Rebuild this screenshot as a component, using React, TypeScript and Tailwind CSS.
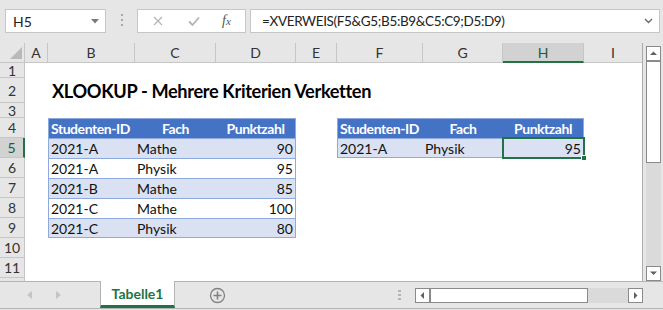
import { ReactElement } from 'react'

type Col = { key: string; w: string }

const COLS: Col[] = [
  { key: 'A', w: 'w-[23px]' },
  { key: 'B', w: 'w-[87px]' },
  { key: 'C', w: 'w-[81px]' },
  { key: 'D', w: 'w-[80px]' },
  { key: 'E', w: 'w-[41px]' },
  { key: 'F', w: 'w-[86px]' },
  { key: 'G', w: 'w-[80px]' },
  { key: 'H', w: 'w-[81px]' },
  { key: 'I', w: 'w-[58px]' },
]

const ROWS: { n: number; h: string }[] = [
  { n: 1, h: 'h-[15px]' },
  { n: 2, h: 'h-[25px]' },
  { n: 3, h: 'h-[15px]' },
  { n: 4, h: 'h-[20px]' },
  { n: 5, h: 'h-[20px]' },
  { n: 6, h: 'h-[20px]' },
  { n: 7, h: 'h-[20px]' },
  { n: 8, h: 'h-[20px]' },
  { n: 9, h: 'h-[20px]' },
  { n: 10, h: 'h-[20px]' },
  { n: 11, h: 'h-[20px]' },
]

type Table = { cols: string[]; startRow: number; header: string[]; rows: string[][] }

const TABLES: Table[] = [
  {
    cols: ['B', 'C', 'D'],
    startRow: 4,
    header: ['Studenten-ID', 'Fach', 'Punktzahl'],
    rows: [
      ['2021-A', 'Mathe', '90'],
      ['2021-A', 'Physik', '95'],
      ['2021-B', 'Mathe', '85'],
      ['2021-C', 'Mathe', '100'],
      ['2021-C', 'Physik', '80'],
    ],
  },
  {
    cols: ['F', 'G', 'H'],
    startRow: 4,
    header: ['Studenten-ID', 'Fach', 'Punktzahl'],
    rows: [['2021-A', 'Physik', '95']],
  },
]

const ACTIVE_COL = 'H'
const ACTIVE_ROW = 5

const renderTableCell = (col: string, row: number): ReactElement | null => {
  for (const t of TABLES) {
    const ci = t.cols.indexOf(col)
    const ri = row - t.startRow
    if (ci < 0 || ri < 0 || ri > t.rows.length) continue
    const isHeader = ri === 0
    const isLast = ri === t.rows.length
    const text = isHeader ? t.header[ci] : t.rows[ri - 1][ci]
    const align = isHeader
      ? ci === 0
        ? 'justify-start'
        : 'justify-center'
      : ci === 2
        ? 'justify-end'
        : 'justify-start'
    return (
      <div
        className={[
          'flex h-full w-full items-center whitespace-nowrap border-t border-[#8ea9db] px-[2px]',
          align,
          isHeader
            ? 'bg-[#4472c4] font-bold tracking-[-0.45px] text-white'
            : ri % 2 === 1
              ? 'bg-[#d9e1f2]'
              : 'bg-white',
          isLast ? 'border-b' : '',
          ci === 0 ? 'border-l' : '',
          ci === 2 ? 'border-r' : '',
        ].join(' ')}
      >
        {text}
      </div>
    )
  }
  return null
}

const FormulaBar = (): ReactElement => (
  <div className="flex h-[43px] shrink-0 items-start pl-[5px] pt-[9px]">
    <div className="flex h-[24px] w-[101px] items-center justify-between border border-[#c6c6c6] bg-white pl-[7px] pr-[6px] text-[14px] text-[#222]">
      <span>H5</span>
      <svg width="8" height="5" viewBox="0 0 8 5">
        <path d="M0 0 H8 L4 4.5 Z" fill="#7a7a7a" />
      </svg>
    </div>
    <div className="ml-[15px] mt-[5px] flex flex-col gap-[3px]">
      <span className="h-[2px] w-[2px] bg-[#a6a6a6]" />
      <span className="h-[2px] w-[2px] bg-[#a6a6a6]" />
      <span className="h-[2px] w-[2px] bg-[#a6a6a6]" />
    </div>
    <div className="ml-[14px] flex h-[24px] w-[109px] items-center border border-[#c6c6c6] bg-white pl-[15px]">
      <svg width="10" height="10" viewBox="0 0 10 10">
        <path d="M1 1 L9 9 M9 1 L1 9" stroke="#b4b4b4" strokeWidth="1.2" />
      </svg>
      <svg className="ml-[25px]" width="12" height="10" viewBox="0 0 12 10">
        <path d="M1 5.5 L4.5 9 L11 1.5" stroke="#b4b4b4" strokeWidth="1.8" fill="none" />
      </svg>
      <span className="ml-[22px] font-['Liberation_Serif',serif] text-[14px] italic leading-none text-[#555]">
        f<span className="text-[11px]">x</span>
      </span>
    </div>
    <div className="ml-[4px] flex h-[24px] w-[410px] items-center justify-between border border-[#c6c6c6] bg-white pl-[11px] pr-[6px] text-[13.5px] tracking-[-0.35px] text-[#222]">
      <span>=XVERWEIS(F5&amp;G5;B5:B9&amp;C5:C9;D5:D9)</span>
      <svg width="9" height="6" viewBox="0 0 9 6">
        <path d="M1 1 L4.5 4.5 L8 1" stroke="#6a6a6a" strokeWidth="1.4" fill="none" />
      </svg>
    </div>
  </div>
)

const Sheet = (): ReactElement => (
  <div className="flex w-[643px] flex-col border-r border-[#ababab] bg-white text-[14px] text-[#111]">
    <div className="flex h-[20px] shrink-0">
      <div className="flex w-[25px] items-end justify-end border-b border-r border-[#c6c6c6] bg-[#e6e6e6] pb-[3px] pr-[2px]">
        <svg width="12" height="12" viewBox="0 0 12 12">
          <path d="M12 0 V12 H0 Z" fill="#b9b9b9" />
        </svg>
      </div>
      {COLS.map((c) => (
        <div
          key={c.key}
          className={[
            'flex items-center justify-center border-r text-[14px]',
            c.w,
            c.key === ACTIVE_COL
              ? 'border-b-2 border-b-[#217346] border-r-[#c6c6c6] bg-[#d2d2d2] text-[#1e5c3a]'
              : 'border-b border-[#c6c6c6] bg-[#e6e6e6] text-[#333]',
            c.key === 'I' ? 'border-r-0' : '',
          ].join(' ')}
        >
          {c.key}
        </div>
      ))}
    </div>
    {ROWS.map((r) => (
      <div key={r.n} className={['flex shrink-0', r.h].join(' ')}>
        <div
          className={[
            'flex w-[25px] items-center justify-center border-b border-[#c6c6c6] text-[14px]',
            r.n === ACTIVE_ROW
              ? 'border-r-2 border-r-[#217346] bg-[#d2d2d2] text-[#1e5c3a]'
              : 'border-r bg-[#e6e6e6] text-[#333]',
          ].join(' ')}
        >
          {r.n}
        </div>
        {COLS.map((c) => (
          <div key={c.key} className={['relative', c.w].join(' ')}>
            {r.n === 2 && c.key === 'B' ? (
              <div className="flex h-full items-center whitespace-nowrap pl-[4px] pt-[2px] text-[18.2px] font-bold tracking-[-0.35px] text-black">
                XLOOKUP - Mehrere Kriterien Verketten
              </div>
            ) : (
              renderTableCell(c.key, r.n)
            )}
            {r.n === ACTIVE_ROW && c.key === ACTIVE_COL && (
              <>
                <div className="absolute inset-[-1px] border-2 border-[#217346]" />
                <div className="absolute bottom-[-3px] right-[-3px] h-[6px] w-[6px] border border-white bg-[#217346]" />
              </>
            )}
          </div>
        ))}
      </div>
    ))}
    <div className="flex h-[3px] shrink-0">
      <div className="w-[25px] border-r border-[#c6c6c6] bg-[#e6e6e6]" />
    </div>
  </div>
)

const ScrollButton = ({ dir }: { dir: 'up' | 'down' | 'left' | 'right' }): ReactElement => {
  const d = {
    up: 'M1 5 L4.5 1.5 L8 5 Z',
    down: 'M1 1.5 L4.5 5 L8 1.5 Z',
    left: 'M5 1 L1.5 4.5 L5 8 Z',
    right: 'M2 1 L5.5 4.5 L2 8 Z',
  }[dir]
  const vertical = dir === 'up' || dir === 'down'
  return (
    <div className="flex h-[15px] w-[15px] shrink-0 items-center justify-center border border-[#8a8a8a] bg-white">
      <svg width={vertical ? 9 : 7} height={vertical ? 7 : 9} viewBox={vertical ? '0 0 9 7' : '0 0 7 9'}>
        <path d={d} fill="#606060" />
      </svg>
    </div>
  )
}

const VScroll = (): ReactElement => (
  <div className="flex w-[20px] flex-col pl-[3px] pt-[3px]">
    <ScrollButton dir="up" />
    <div className="h-[102px] w-[15px] border border-[#8a8a8a] bg-white" />
    <div className="w-[15px] flex-1 bg-[#dadada]" />
    <ScrollButton dir="down" />
  </div>
)

const TabBar = (): ReactElement => (
  <div className="flex h-[29px] shrink-0 flex-col">
    <div className="flex h-[28px] items-center border-b border-t border-[#b4b4b4]">
      <div className="flex w-[100px] items-center pl-[27px]">
        <svg width="5" height="8" viewBox="0 0 5 8">
          <path d="M5 0 V8 L0 4 Z" fill="#c4c4c4" />
        </svg>
        <svg className="ml-[24px]" width="5" height="8" viewBox="0 0 5 8">
          <path d="M0 0 V8 L5 4 Z" fill="#c4c4c4" />
        </svg>
      </div>
      <div className="-mt-[1px] flex h-[27px] w-[75px] items-center justify-center self-start border-x border-b-[3px] border-x-[#b4b4b4] border-b-[#217346] bg-white pt-[1px] text-[14px] font-bold text-[#217346]">
        Tabelle1
      </div>
      <svg className="ml-[34px]" width="17" height="17" viewBox="0 0 17 17">
        <circle cx="8.5" cy="8.5" r="7" stroke="#808080" strokeWidth="1.3" fill="none" />
        <path d="M8.5 4.5 V12.5 M4.5 8.5 H12.5" stroke="#808080" strokeWidth="1.6" />
      </svg>
      <div className="ml-[172px] flex flex-col gap-[2px]">
        <span className="h-[2px] w-[3px] bg-[#b4b4b4]" />
        <span className="h-[2px] w-[3px] bg-[#b4b4b4]" />
        <span className="h-[2px] w-[3px] bg-[#b4b4b4]" />
      </div>
      <div className="ml-[14px] flex h-[15px]">
        <ScrollButton dir="left" />
        <div className="h-[15px] w-[158px] border border-[#8a8a8a] bg-white" />
        <div className="h-[15px] w-[40px] bg-[#dadada]" />
        <ScrollButton dir="right" />
      </div>
    </div>
  </div>
)

const App = (): ReactElement => {
  return (
    <div className="flex h-[310px] w-[663px] flex-col overflow-hidden bg-[#e6e6e6] font-['Lato','Noto_Sans',sans-serif]">
      <FormulaBar />
      <div className="flex h-[238px] shrink-0">
        <Sheet />
        <VScroll />
      </div>
      <TabBar />
    </div>
  )
}

export default App
